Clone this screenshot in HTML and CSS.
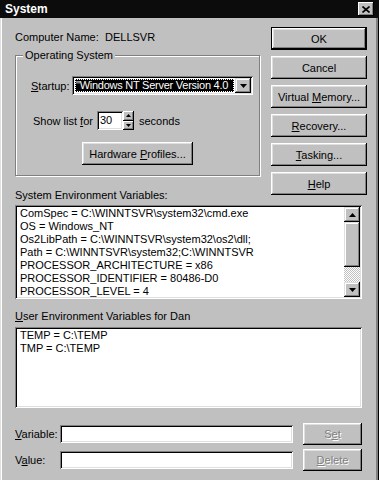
FILE: index.html
```html
<!DOCTYPE html>
<html lang="en">
<head>
    <meta charset="UTF-8">
    <title>System</title>
    <link rel="stylesheet" href="styles.css">
</head>
<body>
    <div class="window">
        <!-- Title bar -->
        <div class="titlebar">
            <span class="title">System</span>
            <span class="close-btn">
                <svg width="8" height="7" viewBox="0 0 8 7">
                    <path d="M0.5 0.5 L7.5 6.5 M7.5 0.5 L0.5 6.5" stroke="#000" stroke-width="1.6" fill="none"/>
                </svg>
            </span>
        </div>

        <div class="client">
            <div class="top">
                <div class="left">
                    <div class="computer-name">
                        <span class="cn-label">Computer Name:</span>
                        <span>DELLSVR</span>
                    </div>

                    <fieldset class="group">
                        <legend>Operating System</legend>
                        <div class="startup-row">
                            <label class="startup-label"><u>S</u>tartup:</label>
                            <div class="combo">
                                <div class="combo-text">"Windows NT Server Version 4.0</div>
                                <div class="combo-btn">
                                    <svg width="7" height="4" viewBox="0 0 7 4"><path d="M0 0 H7 L3.5 4 Z" fill="#000"/></svg>
                                </div>
                            </div>
                        </div>
                        <div class="showlist-row">
                            <label class="showlist-label">Show list <u>f</u>or</label>
                            <div class="spin-field">30</div>
                            <div class="spinner">
                                <div class="spin-btn">
                                    <svg width="5" height="3" viewBox="0 0 5 3"><path d="M2.5 0 L5 3 H0 Z" fill="#000"/></svg>
                                </div>
                                <div class="spin-btn">
                                    <svg width="5" height="3" viewBox="0 0 5 3"><path d="M0 0 H5 L2.5 3 Z" fill="#000"/></svg>
                                </div>
                            </div>
                            <span class="seconds">seconds</span>
                        </div>
                        <div class="hw-row">
                            <button class="btn hw-btn">Hardware <u>P</u>rofiles...</button>
                        </div>
                    </fieldset>

                    <div class="section-label">System Environment Variables:</div>
                </div>

                <div class="buttons">
                    <button class="btn btn-default">OK</button>
                    <button class="btn">Cancel</button>
                    <button class="btn">Virtual <u>M</u>emory...</button>
                    <button class="btn"><u>R</u>ecovery...</button>
                    <button class="btn"><u>T</u>asking...</button>
                    <button class="btn"><u>H</u>elp</button>
                </div>
            </div>

            <!-- System variables -->
            <div class="listbox sys-list">
                <div class="list-items">
                    <div>ComSpec = C:\WINNTSVR\system32\cmd.exe</div>
                    <div>OS = Windows_NT</div>
                    <div>Os2LibPath = C:\WINNTSVR\system32\os2\dll;</div>
                    <div>Path = C:\WINNTSVR\system32;C:\WINNTSVR</div>
                    <div>PROCESSOR_ARCHITECTURE = x86</div>
                    <div>PROCESSOR_IDENTIFIER = 80486-D0</div>
                    <div>PROCESSOR_LEVEL = 4</div>
                </div>
                <div class="scrollbar">
                    <div class="sb-arrow">
                        <svg width="7" height="4" viewBox="0 0 7 4"><path d="M3.5 0 L7 4 H0 Z" fill="#000"/></svg>
                    </div>
                    <div class="sb-thumb"></div>
                    <div class="sb-track"></div>
                    <div class="sb-arrow">
                        <svg width="7" height="4" viewBox="0 0 7 4"><path d="M0 0 H7 L3.5 4 Z" fill="#000"/></svg>
                    </div>
                </div>
            </div>

            <!-- User variables -->
            <div class="section-label user-label"><u>U</u>ser Environment Variables for Dan</div>
            <div class="listbox user-list">
                <div class="list-items">
                    <div>TEMP = C:\TEMP</div>
                    <div>TMP = C:\TEMP</div>
                </div>
            </div>

            <div class="edit-row first-edit">
                <label class="edit-label"><u>V</u>ariable:</label>
                <div class="field"></div>
                <button class="btn btn-disabled">S<u>e</u>t</button>
            </div>
            <div class="edit-row">
                <label class="edit-label">V<u>a</u>lue:</label>
                <div class="field"></div>
                <button class="btn btn-disabled"><u>D</u>elete</button>
            </div>
        </div>
    </div>
</body>
</html>
```

FILE: styles.css
```css
body {
    margin: 0;
    font-family: "Liberation Sans", Arial, sans-serif;
    font-size: 11px;
    color: #000;
    background-color: #c0c0c0;
}

.window {
    width: 379px;
    height: 480px;
    overflow: hidden;
    background-color: #c0c0c0;
}

/* Title bar */
.titlebar {
    height: 18px;
    background-color: #0c0c0c;
    display: flex;
    align-items: center;
    justify-content: space-between;
}

.title {
    color: #fff;
    font-weight: bold;
    font-size: 12px;
    margin-left: 5px;
}

.close-btn {
    width: 16px;
    height: 14px;
    margin-right: 5px;
    box-sizing: border-box;
    background-color: #c0c0c0;
    display: flex;
    align-items: center;
    justify-content: center;
    box-shadow: inset -1px -1px #000, inset 1px 1px #fff, inset -2px -2px #808080;
}

.client {
    height: 462px;
    box-sizing: border-box;
    padding: 0 12px 0 15px;
    box-shadow: inset 1px 0 #dfdfdf, inset 2px 0 #fff, inset -1px 0 #000, inset -3px 0 #808080;
}

.top {
    display: flex;
    gap: 11px;
}

.left {
    width: 245px;
}

.computer-name {
    margin-top: 13px;
    line-height: 12px;
    display: flex;
}

.cn-label {
    width: 90px;
}

/* Group box */
.group {
    margin: 6px 0 0 0;
    padding: 0 0 10px 7px;
    border: 1px solid #808080;
    box-shadow: inset 1px 1px #fff, 1px 1px #fff;
    width: 245px;
    box-sizing: border-box;
}

.group legend {
    padding: 0 2px;
    line-height: 12px;
    background-color: #c0c0c0;
}

.startup-row,
.showlist-row {
    display: flex;
    align-items: center;
    margin-left: 8px;
}

.startup-row {
    margin-top: 15px;
}

.startup-label {
    width: 41px;
}

.combo {
    width: 181px;
    height: 19px;
    box-sizing: border-box;
    padding: 2px;
    display: flex;
    background-color: #fff;
    box-shadow: inset 1px 1px #808080, inset -1px -1px #fff, inset 2px 2px #000, inset -2px -2px #dfdfdf;
}

.combo-text {
    flex: 1;
    min-width: 0;
    white-space: nowrap;
    margin: 1px;
    padding-left: 1px;
    line-height: 13px;
    letter-spacing: -0.25px;
    background-color: #000;
    color: #fff;
    outline: 1px dotted #fff;
    outline-offset: -1px;
}

.combo-btn {
    width: 16px;
    display: flex;
    align-items: center;
    justify-content: center;
    background-color: #c0c0c0;
    box-shadow: inset -1px -1px #000, inset 1px 1px #dfdfdf, inset -2px -2px #808080, inset 2px 2px #fff;
}

.showlist-row {
    margin-top: 16px;
}

.showlist-label {
    margin-left: 2px;
    width: 64px;
}

.spin-field {
    width: 26px;
    height: 19px;
    box-sizing: border-box;
    padding: 2px 3px;
    line-height: 15px;
    background-color: #fff;
    box-shadow: inset 1px 1px #808080, inset -1px -1px #fff, inset 2px 2px #000, inset -2px -2px #dfdfdf;
}

.spinner {
    width: 11px;
    height: 19px;
    display: flex;
    flex-direction: column;
}

.spin-btn {
    flex: 1;
    display: flex;
    align-items: center;
    justify-content: center;
    background-color: #c0c0c0;
    box-shadow: inset -1px -1px #000, inset 1px 1px #fff, inset -2px -2px #808080;
}

.seconds {
    margin-left: 5px;
}

.hw-row {
    display: flex;
    justify-content: center;
    margin-top: 12px;
    padding-right: 7px;
}

/* Buttons */
.btn {
    box-sizing: border-box;
    height: 23px;
    padding: 0;
    border: none;
    background-color: #c0c0c0;
    color: #000;
    font-family: "Liberation Sans", Arial, sans-serif;
    font-size: 11px;
    box-shadow: inset -1px -1px #000, inset 1px 1px #fff, inset -2px -2px #808080, inset 2px 2px #dfdfdf;
}

.btn-default {
    box-shadow: inset 0 0 0 1px #000, inset -2px -2px #000, inset 2px 2px #fff, inset -3px -3px #808080, inset 3px 3px #dfdfdf;
}

.btn-disabled {
    color: #808080;
    text-shadow: 1px 1px #fff;
}

.hw-btn {
    width: 111px;
}

.buttons {
    width: 96px;
    display: flex;
    flex-direction: column;
    gap: 6px;
    margin-top: 9px;
}

.section-label {
    margin-top: 13px;
    line-height: 12px;
}

/* List boxes */
.listbox {
    width: 347px;
    box-sizing: border-box;
    padding: 2px;
    display: flex;
    overflow: hidden;
    background-color: #fff;
    box-shadow: inset 1px 1px #808080, inset -1px -1px #fff, inset 2px 2px #000, inset -2px -2px #dfdfdf;
}

.sys-list {
    height: 94px;
    margin-top: 4px;
}

.list-items {
    flex: 1;
    padding: 0 3px;
    line-height: 13px;
    white-space: nowrap;
    overflow: hidden;
}

.scrollbar {
    width: 16px;
    display: flex;
    flex-direction: column;
}

.sb-arrow {
    height: 15px;
    display: flex;
    align-items: center;
    justify-content: center;
    background-color: #c0c0c0;
    box-shadow: inset -1px -1px #000, inset 1px 1px #dfdfdf, inset -2px -2px #808080, inset 2px 2px #fff;
}

.sb-thumb {
    height: 45px;
    background-color: #c0c0c0;
    box-shadow: inset -1px -1px #000, inset 1px 1px #dfdfdf, inset -2px -2px #808080, inset 2px 2px #fff;
}

.sb-track {
    flex: 1;
    background: repeating-conic-gradient(#c0c0c0 0 25%, #fff 0 50%) 0 0 / 2px 2px;
}

.user-label {
    margin-top: 11px;
}

.user-list {
    height: 81px;
    margin-top: 5px;
}

/* Variable / value edit rows */
.edit-row {
    display: flex;
    align-items: center;
    width: 347px;
    margin-top: 4px;
}

.first-edit {
    margin-top: 15px;
}

.edit-label {
    width: 45px;
}

.field {
    width: 233px;
    height: 18px;
    margin-right: 10px;
    background-color: #fff;
    box-shadow: inset 1px 1px #808080, inset -1px -1px #fff, inset 2px 2px #000, inset -2px -2px #dfdfdf;
}

.edit-row .btn {
    width: 59px;
    height: 22px;
}
```
